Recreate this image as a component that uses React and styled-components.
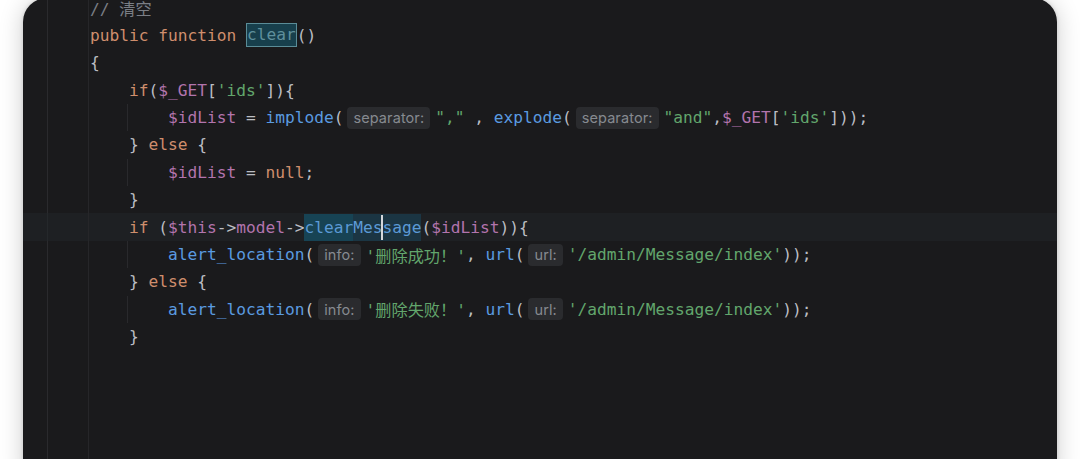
import React from "react";
import styled, { createGlobalStyle } from "styled-components";

const GlobalStyle = createGlobalStyle`
  html, body { margin: 0; padding: 0; background: #ffffff; }
  * { box-sizing: border-box; }
`;

const COLORS = {
  text: "#bcbec4",
  kw: "#cf8e6d",
  fn: "#5a9be0",
  vr: "#b274ad",
  str: "#62a66c",
  cm: "#7a7e85",
};

const Stage = styled.div`
  width: 1080px;
  height: 459px;
  overflow: hidden;
  padding: 0 23px;
  background: #ffffff;
`;

const Panel = styled.div`
  margin-top: -2px;
  height: 490px;
  background: #1a1a1c;
  border-radius: 24px;
  box-shadow: 0 2px 24px rgba(0, 0, 0, 0.2), 0 0 4px rgba(0, 0, 0, 0.14);
  overflow: hidden;
`;

const Lines = styled.div`
  margin-top: -3.7px;
  display: flex;
  flex-direction: column;
  font-family: "DejaVu Sans Mono", "Noto Sans CJK SC", monospace;
  font-size: 16.2px;
  color: ${COLORS.text};
`;

const Row = styled.div`
  display: flex;
  align-items: stretch;
  height: 27.4px;
  background: ${(p) => (p.$current ? "#1e2023" : "transparent")};
`;

const GutterCell = styled.div`
  flex: 0 0 25px;
  border-right: 1px solid ${(p) => (p.$current ? "#25282b" : "#2a2a2d")};
`;

const MarginCell = styled.div`
  flex: 0 0 41px;
  border-right: 1px solid #262629;
`;

const Code = styled.div`
  flex: 1;
  display: flex;
  align-items: center;
  padding-left: 1px;
  white-space: pre;
`;

const Indent = styled.span`
  position: relative;
  display: inline-block;
  width: 4ch;
  height: 27.4px;
  flex: 0 0 auto;
  &::before {
    content: "";
    display: ${(p) => (p.$guide ? "block" : "none")};
    position: absolute;
    left: -2px;
    top: 0;
    bottom: 0;
    width: 1px;
    background: #29292c;
  }
`;

const Tok = styled.span`
  color: ${(p) => COLORS[p.$c || "text"]};
`;

const Usage = styled.span`
  display: inline-block;
  height: 24px;
  line-height: 22px;
  background: #173f4c;
  border: 1px solid #5a8c97;
  color: #5f909c;
`;

const Ident = styled.span`
  display: inline-flex;
  align-items: center;
  height: 27px;
  background: ${(p) => (p.$strong ? "#174354" : "#1b3543")};
  color: #5b9ad6;
`;

const Caret = styled.span`
  display: inline-block;
  width: 0;
  height: 25px;
  border-left: 2px solid #d4d6da;
  margin: 0 -1px;
`;

const Hint = styled.span`
  display: inline-flex;
  align-items: center;
  height: 22px;
  margin: 0 5px 0 4px;
  padding: 0 6px;
  border-radius: 4px;
  background: #2a2b2e;
  color: #868a90;
  font-family: Inter, "Liberation Sans", sans-serif;
  font-size: 14.5px;
  letter-spacing: 0.1px;
`;

function Line({ indent = 0, current, children }) {
  const units = [];
  for (let i = 0; i < indent; i++) {
    units.push(<Indent key={i} $guide={i > 0} />);
  }
  return (
    <Row $current={current}>
      <GutterCell $current={current} />
      <MarginCell />
      <Code>
        {units}
        {children}
      </Code>
    </Row>
  );
}

export default function App() {
  return (
    <>
      <GlobalStyle />
      <Stage>
        <Panel>
          <Lines>
            <Line>
              <Tok $c="cm">// 清空</Tok>
            </Line>
            <Line>
              <Tok $c="kw">public function </Tok>
              <Usage>clear</Usage>
              <Tok>()</Tok>
            </Line>
            <Line>
              <Tok>{"{"}</Tok>
            </Line>
            <Line indent={1}>
              <Tok $c="kw">if</Tok>
              <Tok>(</Tok>
              <Tok $c="vr">$_GET</Tok>
              <Tok>[</Tok>
              <Tok $c="str">'ids'</Tok>
              <Tok>{"]){"}</Tok>
            </Line>
            <Line indent={2}>
              <Tok $c="vr">$idList</Tok>
              <Tok> = </Tok>
              <Tok $c="fn">implode</Tok>
              <Tok>(</Tok>
              <Hint>separator:</Hint>
              <Tok $c="str">","</Tok>
              <Tok> , </Tok>
              <Tok $c="fn">explode</Tok>
              <Tok>(</Tok>
              <Hint>separator:</Hint>
              <Tok $c="str">"and"</Tok>
              <Tok>,</Tok>
              <Tok $c="vr">$_GET</Tok>
              <Tok>[</Tok>
              <Tok $c="str">'ids'</Tok>
              <Tok>]));</Tok>
            </Line>
            <Line indent={1}>
              <Tok>{"} "}</Tok>
              <Tok $c="kw">else</Tok>
              <Tok>{" {"}</Tok>
            </Line>
            <Line indent={2}>
              <Tok $c="vr">$idList</Tok>
              <Tok> = </Tok>
              <Tok $c="kw">null</Tok>
              <Tok>;</Tok>
            </Line>
            <Line indent={1}>
              <Tok>{"}"}</Tok>
            </Line>
            <Line indent={1} current>
              <Tok $c="kw">if</Tok>
              <Tok> (</Tok>
              <Tok $c="vr">$this</Tok>
              <Tok>-&gt;</Tok>
              <Tok $c="vr">model</Tok>
              <Tok>-&gt;</Tok>
              <Ident $strong>clear</Ident>
              <Ident>
                Mes
                <Caret />
                sage
              </Ident>
              <Tok>(</Tok>
              <Tok $c="vr">$idList</Tok>
              <Tok>{")){"}</Tok>
            </Line>
            <Line indent={2}>
              <Tok $c="fn">alert_location</Tok>
              <Tok>(</Tok>
              <Hint>info:</Hint>
              <Tok $c="str">'删除成功！'</Tok>
              <Tok>, </Tok>
              <Tok $c="fn">url</Tok>
              <Tok>(</Tok>
              <Hint>url:</Hint>
              <Tok $c="str">'/admin/Message/index'</Tok>
              <Tok>));</Tok>
            </Line>
            <Line indent={1}>
              <Tok>{"} "}</Tok>
              <Tok $c="kw">else</Tok>
              <Tok>{" {"}</Tok>
            </Line>
            <Line indent={2}>
              <Tok $c="fn">alert_location</Tok>
              <Tok>(</Tok>
              <Hint>info:</Hint>
              <Tok $c="str">'删除失败！'</Tok>
              <Tok>, </Tok>
              <Tok $c="fn">url</Tok>
              <Tok>(</Tok>
              <Hint>url:</Hint>
              <Tok $c="str">'/admin/Message/index'</Tok>
              <Tok>));</Tok>
            </Line>
            <Line indent={1}>
              <Tok>{"}"}</Tok>
            </Line>
            <Line />
            <Line />
            <Line />
            <Line />
            <Line />
          </Lines>
        </Panel>
      </Stage>
    </>
  );
}
